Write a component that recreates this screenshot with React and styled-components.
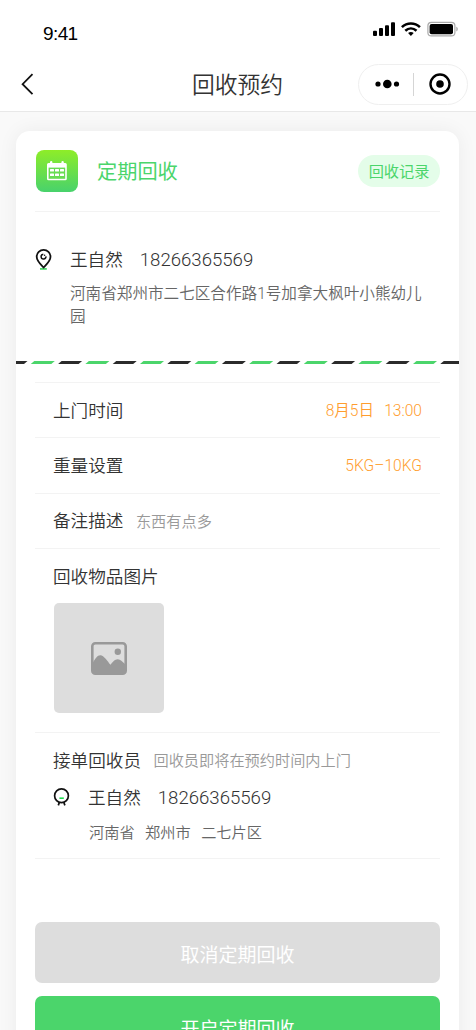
import React from "react";
import styled, { createGlobalStyle } from "styled-components";

const GREEN = "#4bd56b";

const stripes = Array.from({ length: 18 }, (_, i) => i);

const App = () => {
	return (
		<>
			<GlobalStyle />
			<Screen>
				<StatusBar>
					<Clock>9:41</Clock>
					<StatusIcons />
				</StatusBar>
				<NavBar>
					<BackButton aria-label="返回">
						<svg width="14" height="24" viewBox="0 0 14 24">
							<path d="M12.5 2.2 2.6 12.2l9.9 10" fill="none" stroke="#111" strokeWidth="1.8" />
						</svg>
					</BackButton>
					<NavTitle>回收预约</NavTitle>
					<Capsule>
						<svg width="26" height="10" viewBox="0 0 26 10">
							<circle cx="3" cy="5" r="2.6" />
							<circle cx="12.3" cy="5" r="4.3" />
							<circle cx="21.5" cy="5" r="2.6" />
						</svg>
						<CapsuleLine />
						<svg width="22" height="22" viewBox="0 0 22 22">
							<circle cx="11" cy="11" r="9.5" fill="none" stroke="#000" strokeWidth="2.4" />
							<circle cx="11" cy="11" r="3.8" />
						</svg>
					</Capsule>
				</NavBar>
				<Content>
					<Card>
						<CardHeader>
							<CalendarBadge>
								<CalendarIcon />
							</CalendarBadge>
							<CardTitle>定期回收</CardTitle>
							<RecordButton>回收记录</RecordButton>
						</CardHeader>
						<Address>
							<PinIcon />
							<div>
								<Contact>
									王自然<Phone>18266365569</Phone>
								</Contact>
								<AddressText>河南省郑州市二七区合作路1号加拿大枫叶小熊幼儿园</AddressText>
							</div>
						</Address>
						<Stripe viewBox="0 0 443 3">
							{stripes.map((i) => (
								<path
									key={i}
									d={`M${i * 27.3 - 9} 0h20.5l-3.5 3h-20.5z`}
									fill={i % 2 ? GREEN : "#2b2b2b"}
								/>
							))}
						</Stripe>
						<Rows>
							<Row>
								<Label>上门时间</Label>
								<Value>
									8月5日<Time>13:00</Time>
								</Value>
							</Row>
							<Row>
								<Label>重量设置</Label>
								<Value>5KG–10KG</Value>
							</Row>
							<Row>
								<Label>备注描述</Label>
								<Hint>东西有点多</Hint>
							</Row>
							<Section $height={184}>
								<Label>回收物品图片</Label>
								<Photo>
									<PictureIcon />
								</Photo>
							</Section>
							<Section $height={126}>
								<Line>
									<Label>接单回收员</Label>
									<Hint>回收员即将在预约时间内上门</Hint>
								</Line>
								<Collector>
									<PersonIcon />
									<Contact>
										王自然<Phone>18266365569</Phone>
									</Contact>
								</Collector>
								<Area>
									<span>河南省</span>
									<span>郑州市</span>
									<span>二七片区</span>
								</Area>
							</Section>
						</Rows>
						<Actions>
							<Button $color="#ddd">取消定期回收</Button>
							<Button $color={GREEN}>开启定期回收</Button>
						</Actions>
					</Card>
				</Content>
			</Screen>
		</>
	);
};

const StatusIcons = () => (
	<svg width="86" height="18" viewBox="0 0 86 18">
		<rect x="0" y="9.7" width="4" height="5.3" rx="1" />
		<rect x="6" y="7" width="4" height="8" rx="1" />
		<rect x="12" y="4.2" width="4" height="10.8" rx="1" />
		<rect x="18" y="1.2" width="4" height="13.8" rx="1" />
		<g fill="none" stroke="#000" strokeWidth="2.6">
			<path d="M28.9 6.1c5.2-4.9 12.8-4.9 18 0" />
			<path d="M32.3 9.8c3.3-3 7.9-3 11.2 0" />
		</g>
		<path d="M35.1 12.1c1.7-1.4 3.9-1.4 5.6 0l-2.8 2.9z" />
		<rect x="54.9" y="1.3" width="27" height="13.6" rx="3.5" fill="none" stroke="#aaa" strokeWidth="1.2" />
		<rect x="56.6" y="3" width="23.4" height="10.2" rx="2" />
		<path d="M83.3 5.8c2 .7 2 3.9 0 4.6z" fill="#aaa" />
	</svg>
);

const CalendarIcon = () => (
	<svg width="22" height="20" viewBox="0 0 22 20">
		<path
			d="M2.5 2H4v-.8a1.2 1.2 0 0 1 2.4 0V2h9v-.8a1.2 1.2 0 0 1 2.4 0V2h1.5A1.5 1.5 0 0 1 20.8 3.5v14.3a1.5 1.5 0 0 1-1.5 1.5H2.5A1.5 1.5 0 0 1 1 17.8V3.5A1.5 1.5 0 0 1 2.5 2z"
			fill="#fff"
		/>
		<path d="M2.6 6.6h16.6v11.2H2.6z" fill="#68dc52" />
		<g fill="#fff">
			<rect x="4" y="8" width="4" height="2.6" rx=".5" />
			<rect x="9" y="8" width="4" height="2.6" rx=".5" />
			<rect x="14" y="8" width="4" height="2.6" rx=".5" />
			<rect x="4" y="12.4" width="4" height="2.6" rx=".5" />
			<rect x="9" y="12.4" width="4" height="2.6" rx=".5" />
			<rect x="14" y="12.4" width="4" height="2.6" rx=".5" />
		</g>
	</svg>
);

const PinIcon = () => (
	<svg width="17" height="22" viewBox="0 0 17 22">
		<path d="M5 19.9h6.8" stroke={GREEN} strokeWidth="1.8" />
		<path
			d="M8.6 18.4C6.2 16 1.7 12.2 1.7 7.8a6.9 6.9 0 0 1 13.8 0c0 4.4-4.5 8.2-6.9 10.6z"
			fill="none"
			stroke="#111"
			strokeWidth="1.8"
		/>
		<path d="M10.9 7.4a2.4 2.4 0 1 1-2.6-2.2" fill="none" stroke="#111" strokeWidth="1.5" />
		<circle cx="9.6" cy="6.3" r=".8" fill="#111" />
	</svg>
);

const PersonIcon = () => (
	<svg width="17" height="20" viewBox="0 0 17 20">
		<circle cx="8.5" cy="8.8" r="6.9" fill="none" stroke="#111" strokeWidth="1.7" />
		<path d="M6.4 15.2 5.3 18.4M10.8 15.2l1.1 3.2" stroke="#111" strokeWidth="1.7" />
		<path d="M6.4 11.2h4.4" stroke="#1fdc50" strokeWidth="1.6" />
	</svg>
);

const PictureIcon = () => (
	<svg width="36" height="33" viewBox="0 0 36 33">
		<rect x="1.3" y="1.3" width="33.4" height="30.4" rx="3" fill="none" stroke="#999" strokeWidth="2.6" />
		<circle cx="26.8" cy="9.8" r="3.2" fill="#999" />
		<path
			d="M2 20.5c2.3-4 4.3-7.3 7.3-7.3 3.7 0 7.2 6.2 10.2 9.5 2-2.5 4.2-5.5 7.2-5.5 3 0 4.3 2.2 7.3 4.8V31H2z"
			fill="#999"
		/>
	</svg>
);

const GlobalStyle = createGlobalStyle`
	* {
		box-sizing: border-box;
	}
	body {
		margin: 0;
		background: #f9f9f9;
		color: #333;
		font-family: Roboto, "Noto Sans CJK SC", sans-serif;
		font-weight: 350;
	}
	button {
		padding: 0;
		border: 0;
		background: none;
		font: inherit;
	}
	svg {
		display: block;
		flex: none;
	}
	p {
		margin: 0;
	}
`;

const Screen = styled.div`
	display: flex;
	flex-direction: column;
	height: 1030px;
	overflow: hidden;
`;

const StatusBar = styled.div`
	display: flex;
	flex: none;
	justify-content: space-between;
	height: 57px;
	padding: 21px 17px 0 43px;
	background: #fff;
`;

const Clock = styled.div`
	color: #000;
	font: 400 19px/25px "Liberation Sans", sans-serif;
	letter-spacing: -0.6px;
`;

const NavBar = styled.div`
	display: grid;
	grid-template-columns: 130px 1fr 130px;
	align-items: center;
	flex: none;
	height: 55px;
	padding: 0 8px 0 0;
	border-bottom: 1px solid #e8e8e8;
	background: #fff;
`;

const BackButton = styled.button`
	width: 34px;
	padding-left: 20px;
`;

const NavTitle = styled.div`
	padding: 4px 0 0 7px;
	font-size: 22.8px;
	line-height: 34px;
	text-align: center;
`;

const Capsule = styled.div`
	display: flex;
	align-items: center;
	justify-self: end;
	width: 110px;
	height: 41px;
	padding-left: 16px;
	border: 1px solid #efefef;
	border-radius: 21px;
`;

const CapsuleLine = styled.div`
	width: 1px;
	height: 23px;
	margin: 0 15px 0 12px;
	background: #d5d5d5;
`;

const Content = styled.div`
	flex: 1;
	padding: 19px 17px 0 16px;
`;

const Card = styled.div`
	height: 960px;
	border-radius: 14px;
	background: #fff;
	box-shadow: 0 0 20px rgba(0, 0, 0, 0.06);
`;

const CardHeader = styled.div`
	display: flex;
	align-items: center;
	height: 81px;
	margin: 0 19px;
	padding-left: 1px;
	border-bottom: 1px solid #f3f3f3;
`;

const CalendarBadge = styled.div`
	display: flex;
	align-items: center;
	justify-content: center;
	width: 42px;
	height: 42px;
	border-radius: 8px;
	background: linear-gradient(#8eed28, #48d26c);
`;

const CardTitle = styled.div`
	flex: 1;
	padding: 2px 0 0 19px;
	color: ${GREEN};
	font-size: 20.2px;
	font-weight: 400;
	line-height: 30px;
`;

const RecordButton = styled.button`
	width: 82px;
	height: 32px;
	padding-bottom: 2px;
	border-radius: 16px;
	background: #e4fde9;
	color: ${GREEN};
	font-size: 15.2px;
	font-weight: 400;
`;

const Address = styled.div`
	display: flex;
	gap: 18px;
	height: 149px;
	padding: 36px 30px 0 19px;

	& > svg {
		margin-top: 1px;
	}
`;

const Contact = styled.div`
	display: flex;
	align-items: center;
	font-size: 17.6px;
	line-height: 24px;
`;

const Phone = styled.span`
	margin-left: 17px;
	font-size: 18.6px;
`;

const AddressText = styled.p`
	margin-top: 11px;
	color: #666;
	font-size: 15.6px;
	line-height: 23px;
`;

const Stripe = styled.svg`
	width: 443px;
	height: 3px;
`;

const Rows = styled.div`
	margin: 18px 19px 0;
	border-top: 1px solid #f3f3f3;
`;

const Row = styled.div`
	display: flex;
	align-items: center;
	height: 55.3px;
	padding: 1px 18px 0;
	border-bottom: 1px solid #f3f3f3;
`;

const Label = styled.div`
	font-size: 17.6px;
	line-height: 26px;
`;

const Value = styled.div`
	margin-left: auto;
	color: #ff9d2e;
	font-size: 15.6px;
	line-height: 24px;
`;

const Time = styled.span`
	margin-left: 10px;
`;

const Hint = styled.div`
	margin-left: 12.5px;
	padding-top: 1px;
	color: #999;
	font-size: 15.2px;
	line-height: 24px;
`;

const Section = styled.div`
	height: ${({ $height }) => $height}px;
	padding: 15px 18px 0;
	border-bottom: 1px solid #f3f3f3;
`;

const Photo = styled.div`
	display: flex;
	align-items: center;
	justify-content: center;
	width: 110px;
	height: 110px;
	margin: 13px 0 0 1px;
	padding-top: 1px;
	border-radius: 5px;
	background: #ddd;
`;

const Line = styled.div`
	display: flex;
	align-items: center;
`;

const Collector = styled.div`
	display: flex;
	align-items: center;
	gap: 18px;
	margin-top: 12px;

	& > svg {
		margin-top: -2px;
	}
`;

const Area = styled.div`
	display: flex;
	gap: 10.5px;
	margin: 11px 0 0 36px;
	color: #666;
	font-size: 15.2px;
	line-height: 24px;
`;

const Actions = styled.div`
	display: flex;
	flex-direction: column;
	gap: 13px;
	margin: 63px 19px 0;
`;

const Button = styled.button`
	height: 61px;
	padding-top: 3px;
	border-radius: 7px;
	background: ${({ $color }) => $color};
	color: #fff;
	font-size: 19px;
	font-weight: 400;
`;

export default App;
